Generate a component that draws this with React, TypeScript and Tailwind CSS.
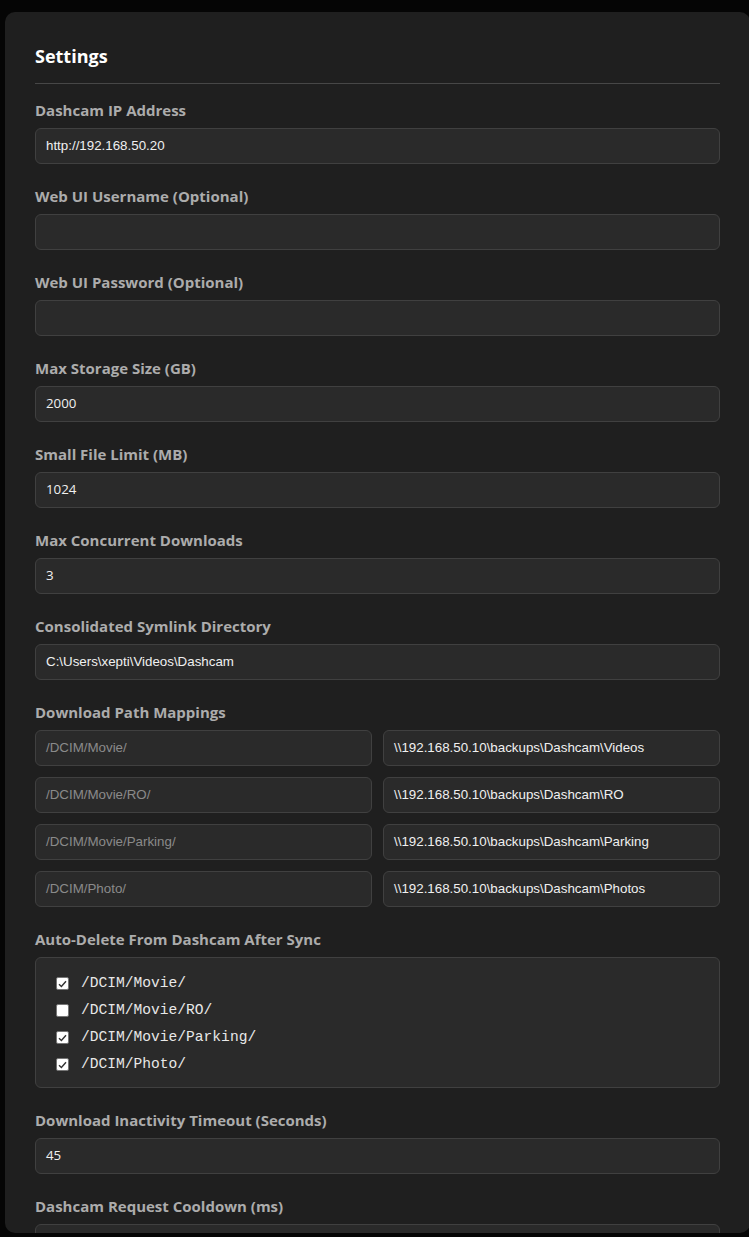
import React from "react";

const labelCls =
  "block h-[20px] leading-[20px] mb-[8px] text-[15px] font-bold text-[#acacac] [font-family:'Open_Sans',sans-serif] whitespace-nowrap";
const inputBase =
  "h-[36px] w-full rounded-[6px] border border-[#404040] bg-[#2a2a2a] px-[10px] flex items-center text-[13.33px] whitespace-nowrap overflow-hidden";
const arial = "[font-family:'Liberation_Sans',Arial,sans-serif]";
const segoe = "[font-family:'Open_Sans',sans-serif]";

function Field({ label, value, num }: { label: string; value?: string; num?: boolean }) {
  return (
    <div className="mb-[22px]">
      <div className={labelCls}>{label}</div>
      <div className={`${inputBase} ${num ? segoe : arial} text-[#f0f0f0]`}>{value ?? ""}</div>
    </div>
  );
}

function Check({ checked }: { checked: boolean }) {
  return (
    <span className="w-[13px] h-[13px] bg-white border border-[#767676] rounded-[2px] flex items-center justify-center shrink-0">
      {checked && (
        <svg width="9" height="8" viewBox="0 0 9 8">
          <path d="M1 4.2 L3.4 6.5 L8 1.2" fill="none" stroke="#333" strokeWidth="1.4" />
        </svg>
      )}
    </span>
  );
}

export default function App() {
  const maps = [
    ["/DCIM/Movie/", "\\\\192.168.50.10\\backups\\Dashcam\\Videos"],
    ["/DCIM/Movie/RO/", "\\\\192.168.50.10\\backups\\Dashcam\\RO"],
    ["/DCIM/Movie/Parking/", "\\\\192.168.50.10\\backups\\Dashcam\\Parking"],
    ["/DCIM/Photo/", "\\\\192.168.50.10\\backups\\Dashcam\\Photos"],
  ];
  const checks: [string, boolean][] = [
    ["/DCIM/Movie/", true],
    ["/DCIM/Movie/RO/", false],
    ["/DCIM/Movie/Parking/", true],
    ["/DCIM/Photo/", true],
  ];
  return (
    <div className="w-[749px] h-[1237px] bg-[#050505] overflow-hidden pt-[12px]">
      <div className="ml-[5px] w-[745px] h-[1221px] bg-[#1f1f1f] rounded-[10px] overflow-hidden px-[30px] pt-[30px]">
        <div className="h-[28px] leading-[28px] text-[18px] font-bold text-white [font-family:'Open_Sans',sans-serif]">
          Settings
        </div>
        <div className="mt-[13px] border-t border-[#474747] mb-[16px]" />
        <Field label="Dashcam IP Address" value="http://192.168.50.20" />
        <Field label="Web UI Username (Optional)" />
        <Field label="Web UI Password (Optional)" />
        <Field label="Max Storage Size (GB)" value="2000" num />
        <Field label="Small File Limit (MB)" value="1024" num />
        <Field label="Max Concurrent Downloads" value="3" num />
        <Field label="Consolidated Symlink Directory" value="C:\Users\xepti\Videos\Dashcam" />
        <div className="mb-[22px]">
          <div className={labelCls}>Download Path Mappings</div>
          <div className="flex flex-col gap-[11px]">
            {maps.map(([a, b]) => (
              <div key={a} className="grid grid-cols-2 gap-[11px]">
                <div className={`${inputBase} ${arial} text-[#8a8a8a]`}>{a}</div>
                <div className={`${inputBase} ${arial} text-[#f0f0f0]`}>{b}</div>
              </div>
            ))}
          </div>
        </div>
        <div className="mb-[22px]">
          <div className={labelCls}>Auto-Delete From Dashcam After Sync</div>
          <div className="h-[131px] rounded-[6px] border border-[#404040] bg-[#2a2a2a] pl-[20px] pt-[12px] flex flex-col">
            {checks.map(([t, c]) => (
              <div key={t} className="h-[27px] flex items-center gap-[12px]">
                <Check checked={c} />
                <span className="text-[14.6px] text-[#e8e8e8] [font-family:'Liberation_Mono',monospace]">{t}</span>
              </div>
            ))}
          </div>
        </div>
        <Field label="Download Inactivity Timeout (Seconds)" value="45" num />
        <Field label="Dashcam Request Cooldown (ms)" value="" num />
      </div>
    </div>
  );
}
